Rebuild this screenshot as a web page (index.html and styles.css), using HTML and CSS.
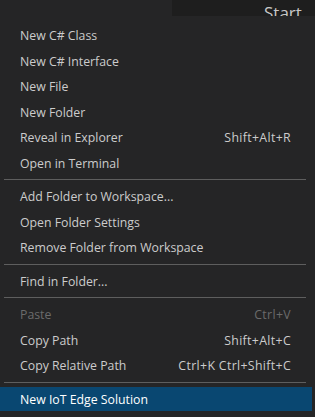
FILE: index.html
```html
<!DOCTYPE html>
<html>
<head>
<meta charset="utf-8">
<link rel="stylesheet" href="styles.css">
</head>
<body>
<div class="top">
  <div class="top-left"></div>
  <div class="top-right"><span class="start">Start</span></div>
</div>
<div class="menu">
  <div class="item"><span>New C# Class</span></div>
  <div class="item"><span>New C# Interface</span></div>
  <div class="item"><span>New File</span></div>
  <div class="item"><span>New Folder</span></div>
  <div class="item"><span>Reveal in Explorer</span><span class="key">Shift+Alt+R</span></div>
  <div class="item"><span>Open in Terminal</span></div>
  <div class="sep"></div>
  <div class="item"><span>Add Folder to Workspace...</span></div>
  <div class="item"><span>Open Folder Settings</span></div>
  <div class="item"><span>Remove Folder from Workspace</span></div>
  <div class="sep"></div>
  <div class="item"><span>Find in Folder...</span></div>
  <div class="sep"></div>
  <div class="item disabled"><span>Paste</span><span class="key">Ctrl+V</span></div>
  <div class="item"><span>Copy Path</span><span class="key">Shift+Alt+C</span></div>
  <div class="item"><span>Copy Relative Path</span><span class="key">Ctrl+K Ctrl+Shift+C</span></div>
  <div class="sep"></div>
  <div class="item active"><span>New IoT Edge Solution</span></div>
</div>
</body>
</html>
```
FILE: styles.css
```css
html, body {
  margin: 0;
  padding: 0;
}
body {
  width: 315px;
  height: 417px;
  overflow: hidden;
  background: #252526;
  font-family: "Open Sans", "Noto Sans", sans-serif;
  color: #cccccc;
}
.top {
  display: flex;
  height: 16px;
}
.top-left {
  width: 172px;
  background: #252526;
}
.top-right {
  flex: 1;
  background: #1e1e1e;
  overflow: hidden;
}
.start {
  display: block;
  padding-left: 92px;
  margin-top: 1px;
  font-size: 17px;
  line-height: 24px;
  color: #c8c8c8;
}
.menu {
  width: 312px;
  background: #252526;
  padding-top: 6.8px;
  display: flex;
  flex-direction: column;
}
.item {
  height: 23.5px;
  margin: 1px 0;
  display: flex;
  align-items: center;
  justify-content: space-between;
  padding: 0 21px 0 20px;
  font-size: 12.3px;
  white-space: nowrap;
}
.key {
  letter-spacing: 0.35px;
}
.disabled {
  color: #6b6b6b;
}
.active {
  background: #094771;
  color: #ffffff;
}
.sep {
  height: 1px;
  background: #5e5e5e;
  margin: 3.5px 6px 3.5px 4px;
}
```
